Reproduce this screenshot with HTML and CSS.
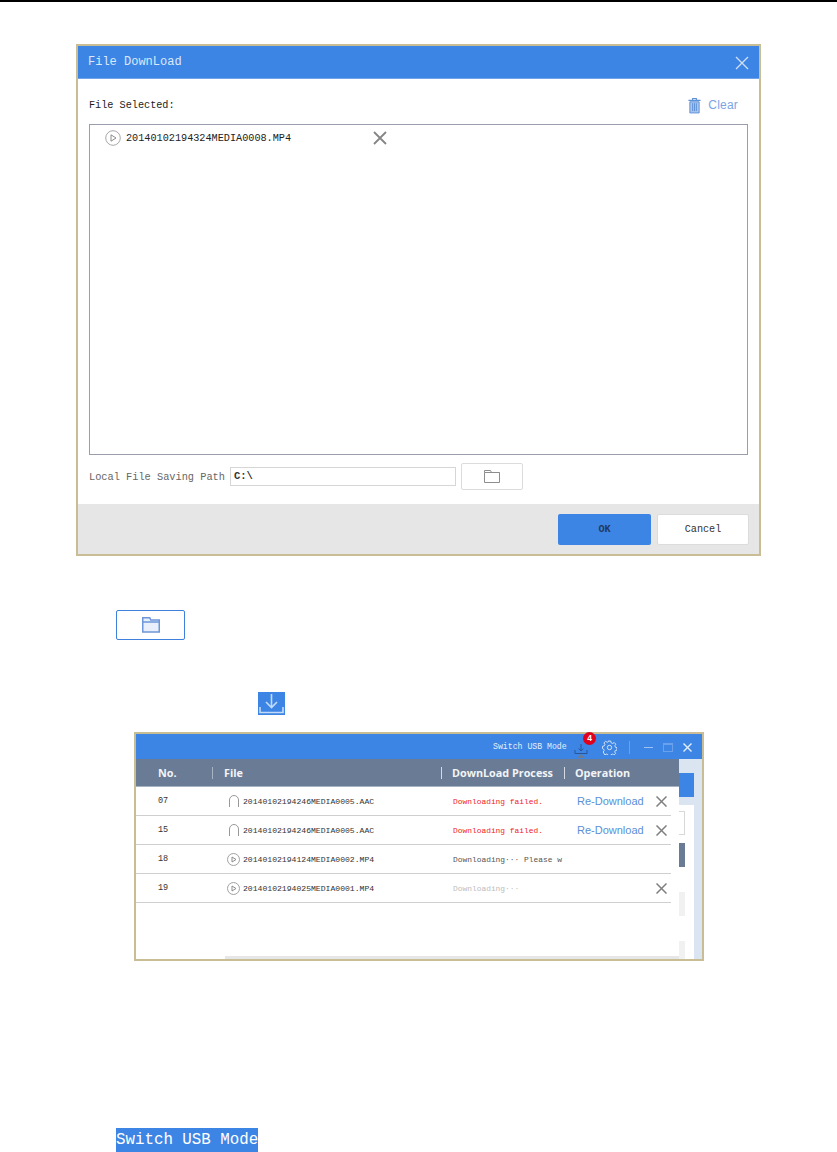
FILE: index.html
```html
<!DOCTYPE html>
<html lang="en">
<head>
<meta charset="utf-8">
<title>File DownLoad</title>
<link rel="stylesheet" href="styles.css">
</head>
<body>
<div class="rule"></div>

<section class="dialog">
  <header class="dialog-title">
    <span>File DownLoad</span>
    <svg class="dialog-close" width="14" height="14" viewBox="0 0 14 14"><path d="M1 1l12 12M13 1L1 13" stroke="#cfe0f8" stroke-width="1.3" fill="none"/></svg>
  </header>
  <div class="dialog-body">
    <div class="selected-head">
      <span class="selected-label">File Selected:</span>
      <span class="clear">
        <svg width="13" height="17" viewBox="0 0 14 17"><path d="M0.5 3h13M5 3V1h4v2" stroke="#5b8fd6" stroke-width="1.2" fill="none"/><path d="M2 4.500h10V16.500H2z" fill="#a9c5ec" stroke="#5b8fd6"/><path d="M5 6v8.500M7 6v8.500M9 6v8.500" stroke="#5b8fd6" fill="none"/></svg>
        <span>Clear</span>
      </span>
    </div>
    <div class="file-box">
      <div class="file-row">
        <svg width="16" height="16" viewBox="0 0 16 16"><circle cx="8" cy="8" r="7.300" fill="none" stroke="#a8a8a8"/><path d="M6 4.800l5 3.200-5 3.200z" fill="none" stroke="#8c8c8c"/></svg>
        <span class="file-name">20140102194324MEDIA0008.MP4</span>
        <svg class="file-remove" width="14" height="14" viewBox="0 0 14 14"><path d="M1 1l12 12M13 1L1 13" stroke="#858585" stroke-width="1.800" fill="none"/></svg>
      </div>
    </div>
    <div class="path-row">
      <span class="path-label">Local File Saving Path</span>
      <span class="path-input">C:\</span>
      <span class="path-button">
        <svg width="16" height="13" viewBox="0 0 16 13"><path d="M0.500 2.500V0.500h6l1 2h8v10H0.500zM0.500 2.500h15" fill="none" stroke="#8d8d8d"/></svg>
      </span>
    </div>
  </div>
  <footer class="dialog-footer">
    <span class="btn btn-primary">OK</span>
    <span class="btn btn-plain">Cancel</span>
  </footer>
</section>

<div class="folder-sample">
  <svg width="18" height="16" viewBox="0 0 18 16"><path d="M0.750 3V0.750h7l1 2.250h8.500v12H0.750zM0.750 5h16.500" fill="#e9f0fb" stroke="#6d97d8" stroke-width="1.500"/></svg>
</div>

<div class="download-sample">
  <svg width="27" height="23" viewBox="0 0 27 23"><path d="M13.500 2v13M8 10l5.500 5.500L19 10" fill="none" stroke="#c4dbf8" stroke-width="1.600"/><path d="M2 15v5.500h23V15" fill="none" stroke="#c4dbf8" stroke-width="1.600"/></svg>
</div>

<section class="window">
  <header class="window-title">
    <span class="usb">Switch USB Mode</span>
    <span class="dl-icon">
      <svg width="14" height="14" viewBox="0 0 14 14"><path d="M7 3v7M4.500 7.500L7 10l2.500-2.500M1 9v3.500h12V9" fill="none" stroke="#27569b"/></svg>
      <span class="badge">4</span>
      <span class="arrow"></span>
    </span>
    <svg class="gear" width="15" height="15" viewBox="0 0 15 15"><circle cx="7.500" cy="7.500" r="2.200" fill="none" stroke="#cfe0f8"/><path d="M6.300 1h2.400l.4 1.800 1.500.7 1.600-1 1.600 1.700-1 1.500.7 1.600 1.500.4v2.400l-1.700.4-.6 1.500 1 1.500-1.700 1.600-1.500-1-1.600.7-.4 1.200H6.300l-.4-1.300-1.500-.7-1.500 1L1.200 12l1-1.500-.7-1.500L.5 8.600V6.300l1.700-.4.7-1.500-1-1.500 1.700-1.600 1.500 1 1.500-.7z" fill="none" stroke="#cfe0f8"/></svg>
    <span class="title-sep"></span>
    <span class="win-min"></span>
    <span class="win-max"></span>
    <svg class="win-close" width="9" height="9" viewBox="0 0 9 9"><path d="M0.500 0.500l8 8M8.500 0.500l-8 8" stroke="#e4eefb" stroke-width="1.400" fill="none"/></svg>
  </header>
  <div class="window-body">
    <div class="panel">
      <div class="table-head">
        <span class="th th-no">No.</span>
        <span class="th th-file">File</span>
        <span class="th th-proc">DownLoad Process</span>
        <span class="th th-op">Operation</span>
      </div>
      <div class="row">
        <span class="cell-no">07</span>
        <span class="cell-file">
          <svg width="12" height="14" viewBox="0 0 12 14"><path d="M1.500 13V6a4.500 4.500 0 0 1 9 0v7" fill="none" stroke="#999"/></svg>
          <span>20140102194246MEDIA0005.AAC</span>
        </span>
        <span class="cell-proc failed">Downloading failed.</span>
        <span class="cell-op">Re-Download</span>
        <svg width="11" height="11" viewBox="0 0 11 11"><path d="M0.500 0.500l10 10M10.500 0.500l-10 10" stroke="#7f7f7f" stroke-width="1.500" fill="none"/></svg>
      </div>
      <div class="row">
        <span class="cell-no">15</span>
        <span class="cell-file">
          <svg width="12" height="14" viewBox="0 0 12 14"><path d="M1.500 13V6a4.500 4.500 0 0 1 9 0v7" fill="none" stroke="#999"/></svg>
          <span>20140102194246MEDIA0005.AAC</span>
        </span>
        <span class="cell-proc failed">Downloading failed.</span>
        <span class="cell-op">Re-Download</span>
        <svg width="11" height="11" viewBox="0 0 11 11"><path d="M0.500 0.500l10 10M10.500 0.500l-10 10" stroke="#7f7f7f" stroke-width="1.500" fill="none"/></svg>
      </div>
      <div class="row">
        <span class="cell-no">18</span>
        <span class="cell-file">
          <svg class="play-mini" width="13" height="13" viewBox="0 0 13 13"><circle cx="6.500" cy="6.500" r="6" fill="none" stroke="#a0a0a0"/><path d="M5 4l4 2.500L5 9z" fill="none" stroke="#8c8c8c"/></svg>
          <span>20140102194124MEDIA0002.MP4</span>
        </span>
        <span class="cell-proc cell-wide">Downloading··· Please w</span>
      </div>
      <div class="row">
        <span class="cell-no">19</span>
        <span class="cell-file">
          <svg class="play-mini" width="13" height="13" viewBox="0 0 13 13"><circle cx="6.500" cy="6.500" r="6" fill="none" stroke="#a0a0a0"/><path d="M5 4l4 2.500L5 9z" fill="none" stroke="#8c8c8c"/></svg>
          <span>20140102194025MEDIA0001.MP4</span>
        </span>
        <span class="cell-proc pending">Downloading···</span>
        <span class="cell-op"></span>
        <svg width="11" height="11" viewBox="0 0 11 11"><path d="M0.500 0.500l10 10M10.500 0.500l-10 10" stroke="#7f7f7f" stroke-width="1.500" fill="none"/></svg>
      </div>
      <div class="panel-scroll"></div>
    </div>
    <aside class="side">
      <div class="side-block"></div>
      <div class="side-sheet">
        <div class="sheet-input"></div>
        <div class="sheet-dark"></div>
        <div class="sheet-grey"></div>
        <div class="sheet-grey sheet-last"></div>
      </div>
    </aside>
  </div>
</section>

<div class="usb-highlight">Switch USB Mode</div>
</body>
</html>
```
FILE: styles.css
```css
* { box-sizing: border-box; }

html, body { margin: 0; padding: 0; background: #fff; }

body {
  width: 837px;
  height: 1152px;
  overflow: hidden;
  font-family: "Liberation Mono", monospace;
  color: #222;
}

svg { display: block; flex: none; }

.rule { height: 2px; background: #000; }

/* File download dialog */
.dialog {
  width: 685px;
  height: 512px;
  margin: 42px 0 0 76px;
  border: 2px solid #c8bd94;
  background: #fff;
  display: flex;
  flex-direction: column;
}

.dialog-title {
  height: 33px;
  flex: none;
  background: #3d85e4;
  border-bottom: 1px solid #70a3ea;
  color: #dbe8fb;
  font-size: 12px;
  display: flex;
  align-items: center;
  justify-content: space-between;
  padding: 0 10px 0 10px;
}

.dialog-close { margin-top: 1px; }

.dialog-body {
  flex: 1;
  padding: 0 11px;
}

.selected-head {
  height: 45px;
  padding: 16px 10px 9px 0;
  display: flex;
  align-items: center;
  justify-content: space-between;
}

.selected-label { font-size: 10.2px; color: #222; }

.clear {
  display: flex;
  align-items: center;
  gap: 7px;
  font-family: "Liberation Sans", sans-serif;
  font-size: 12px;
  letter-spacing: 0.2px;
  color: #7aa5e4;
}

.file-box {
  height: 331px;
  border: 1px solid #9a9eaa;
  padding: 5px 0 0 15px;
}

.file-row {
  display: flex;
  align-items: center;
  height: 16px;
}

.file-name {
  width: 247px;
  margin-left: 5px;
  font-size: 10.2px;
  color: #222;
}

.path-row {
  margin-top: 8px;
  height: 27px;
  display: flex;
  align-items: center;
}

.path-label {
  width: 141px;
  font-size: 10.3px;
  color: #666;
}

.path-input {
  width: 226px;
  height: 19px;
  border: 1px solid #d6d6d6;
  padding-left: 3px;
  font-size: 10.5px;
  line-height: 17px;
  font-weight: bold;
  color: #333;
}

.path-button {
  width: 62px;
  height: 27px;
  margin-left: 5px;
  border: 1px solid #dcdcdc;
  border-radius: 2px;
  display: flex;
  align-items: center;
  justify-content: center;
}

.dialog-footer {
  height: 50px;
  flex: none;
  background: #e6e6e6;
  padding: 10px 10px 9px 0;
  display: flex;
  justify-content: flex-end;
  gap: 6px;
}

.btn {
  width: 92px;
  display: flex;
  align-items: center;
  justify-content: center;
  font-size: 10.2px;
  border-radius: 2px;
}

.btn-primary { width: 93px; background: #3d85e4; color: #1f3a5f; font-weight: bold; }

.btn-plain { background: #fff; border: 1px solid #dcdcdc; color: #333; }

/* Samples in the text */
.folder-sample {
  width: 69px;
  height: 30px;
  margin: 54px 0 0 116px;
  border: 1.500px solid #3f80dc;
  border-radius: 2px;
  display: flex;
  align-items: center;
  justify-content: center;
}

.download-sample {
  width: 27px;
  height: 23px;
  margin: 52px 0 0 258px;
  background: #3d85e4;
}

/* App window */
.window {
  width: 570px;
  height: 229px;
  margin: 17px 0 0 134px;
  border: 2px solid #c8bd94;
  background: #dbe5f2;
}

.window-title {
  height: 25px;
  background: #3d85e4;
  display: flex;
  align-items: center;
  padding-left: 357px;
}

.usb { width: 81px; font-size: 8.200px; color: #e4eefb; }

.dl-icon {
  position: relative;
  width: 14px;
  height: 14px;
  margin-top: 2px;
}

.badge {
  position: absolute;
  left: 9px;
  top: -9px;
  width: 13px;
  height: 13px;
  border-radius: 50%;
  background: #e0001b;
  color: #fff;
  font-family: "Liberation Sans", sans-serif;
  font-size: 8.500px;
  font-weight: bold;
  line-height: 13px;
  text-align: center;
}

.arrow {
  position: absolute;
  left: 3px;
  top: 13px;
  width: 0;
  height: 0;
  border-left: 4px solid transparent;
  border-right: 4px solid transparent;
  border-bottom: 4px solid #6a7b95;
}

.gear { margin-left: 14px; margin-top: 2px; }

.title-sep {
  width: 1px;
  height: 13px;
  margin: 2px 0 0 12px;
  background: #6aa1ea;
}

.win-min {
  width: 9px;
  height: 1px;
  margin: 2px 0 0 14px;
  background: #9cc0f2;
}

.win-max {
  width: 10px;
  height: 9px;
  margin: 2px 0 0 10px;
  border: 1px solid #6aa1ea;
  border-top-width: 2px;
}

.win-close { margin: 2px 0 0 10px; }

.window-body {
  height: 200px;
  display: flex;
}

.panel {
  width: 543px;
  background: #fff;
  display: flex;
  flex-direction: column;
}

.table-head {
  height: 28px;
  flex: none;
  background: #6a7b95;
  border-bottom: 1px solid #a7b2c2;
  display: flex;
  align-items: center;
  padding-left: 22px;
}

.th {
  height: 12px;
  font-family: "Open Sans", sans-serif;
  font-size: 10.800px;
  font-weight: 700;
  line-height: 12px;
  color: #f2f4f7;
  white-space: nowrap;
}

.th-no { width: 54px; }
.th-file { width: 229px; padding-left: 11px; border-left: 1px solid #a7b2c2; }
.th-proc { width: 123px; padding-left: 10px; border-left: 1px solid #d5dae2; }
.th-op { padding-left: 10px; border-left: 1px solid #d5dae2; }

.row {
  width: 535px;
  height: 29px;
  flex: none;
  padding: 0 0 0 22px;
  border-bottom: 1px solid #cfcfcf;
  display: flex;
  align-items: center;
  font-size: 8.100px;
  color: #333;
}

.cell-no { width: 70px; font-size: 8.500px; }

.cell-file {
  width: 225px;
  display: flex;
  align-items: center;
  gap: 3px;
  white-space: nowrap;
}

.play-mini { margin-left: -1px; }

.cell-proc {
  width: 124px;
  font-size: 7.900px;
  white-space: nowrap;
}

.cell-wide { color: #555; }

.failed { color: #f01c1c; }

.pending { color: #bdbdbd; }

.cell-op {
  width: 79px;
  font-family: "Liberation Sans", sans-serif;
  font-size: 11px;
  color: #5a8fd8;
}

.panel-scroll {
  height: 3px;
  margin: auto 0 0 89px;
  background: #e6e6e6;
}

.side {
  width: 23px;
  padding-top: 14px;
  display: flex;
  flex-direction: column;
}

.side-block {
  width: 15px;
  height: 24px;
  flex: none;
  background: #3d85e4;
}

.side-sheet {
  width: 15px;
  flex: 1;
  margin-top: 8px;
  background: #fff;
  padding-top: 6px;
  display: flex;
  flex-direction: column;
}

.sheet-input {
  width: 6px;
  height: 24px;
  border: 1px solid #d8d8d8;
  border-left: 0;
}

.sheet-dark {
  width: 6px;
  height: 24px;
  margin-top: 8px;
  background: #6a7b95;
}

.sheet-grey {
  width: 6px;
  height: 24px;
  margin-top: 25px;
  background: #f1f1f1;
}

.sheet-last { height: 18px; }

.usb-highlight {
  width: 142px;
  height: 24px;
  margin: 167px 0 0 116px;
  background: #3d85e4;
  color: #fff;
  font-size: 15.800px;
  line-height: 24px;
  white-space: nowrap;
}
```
